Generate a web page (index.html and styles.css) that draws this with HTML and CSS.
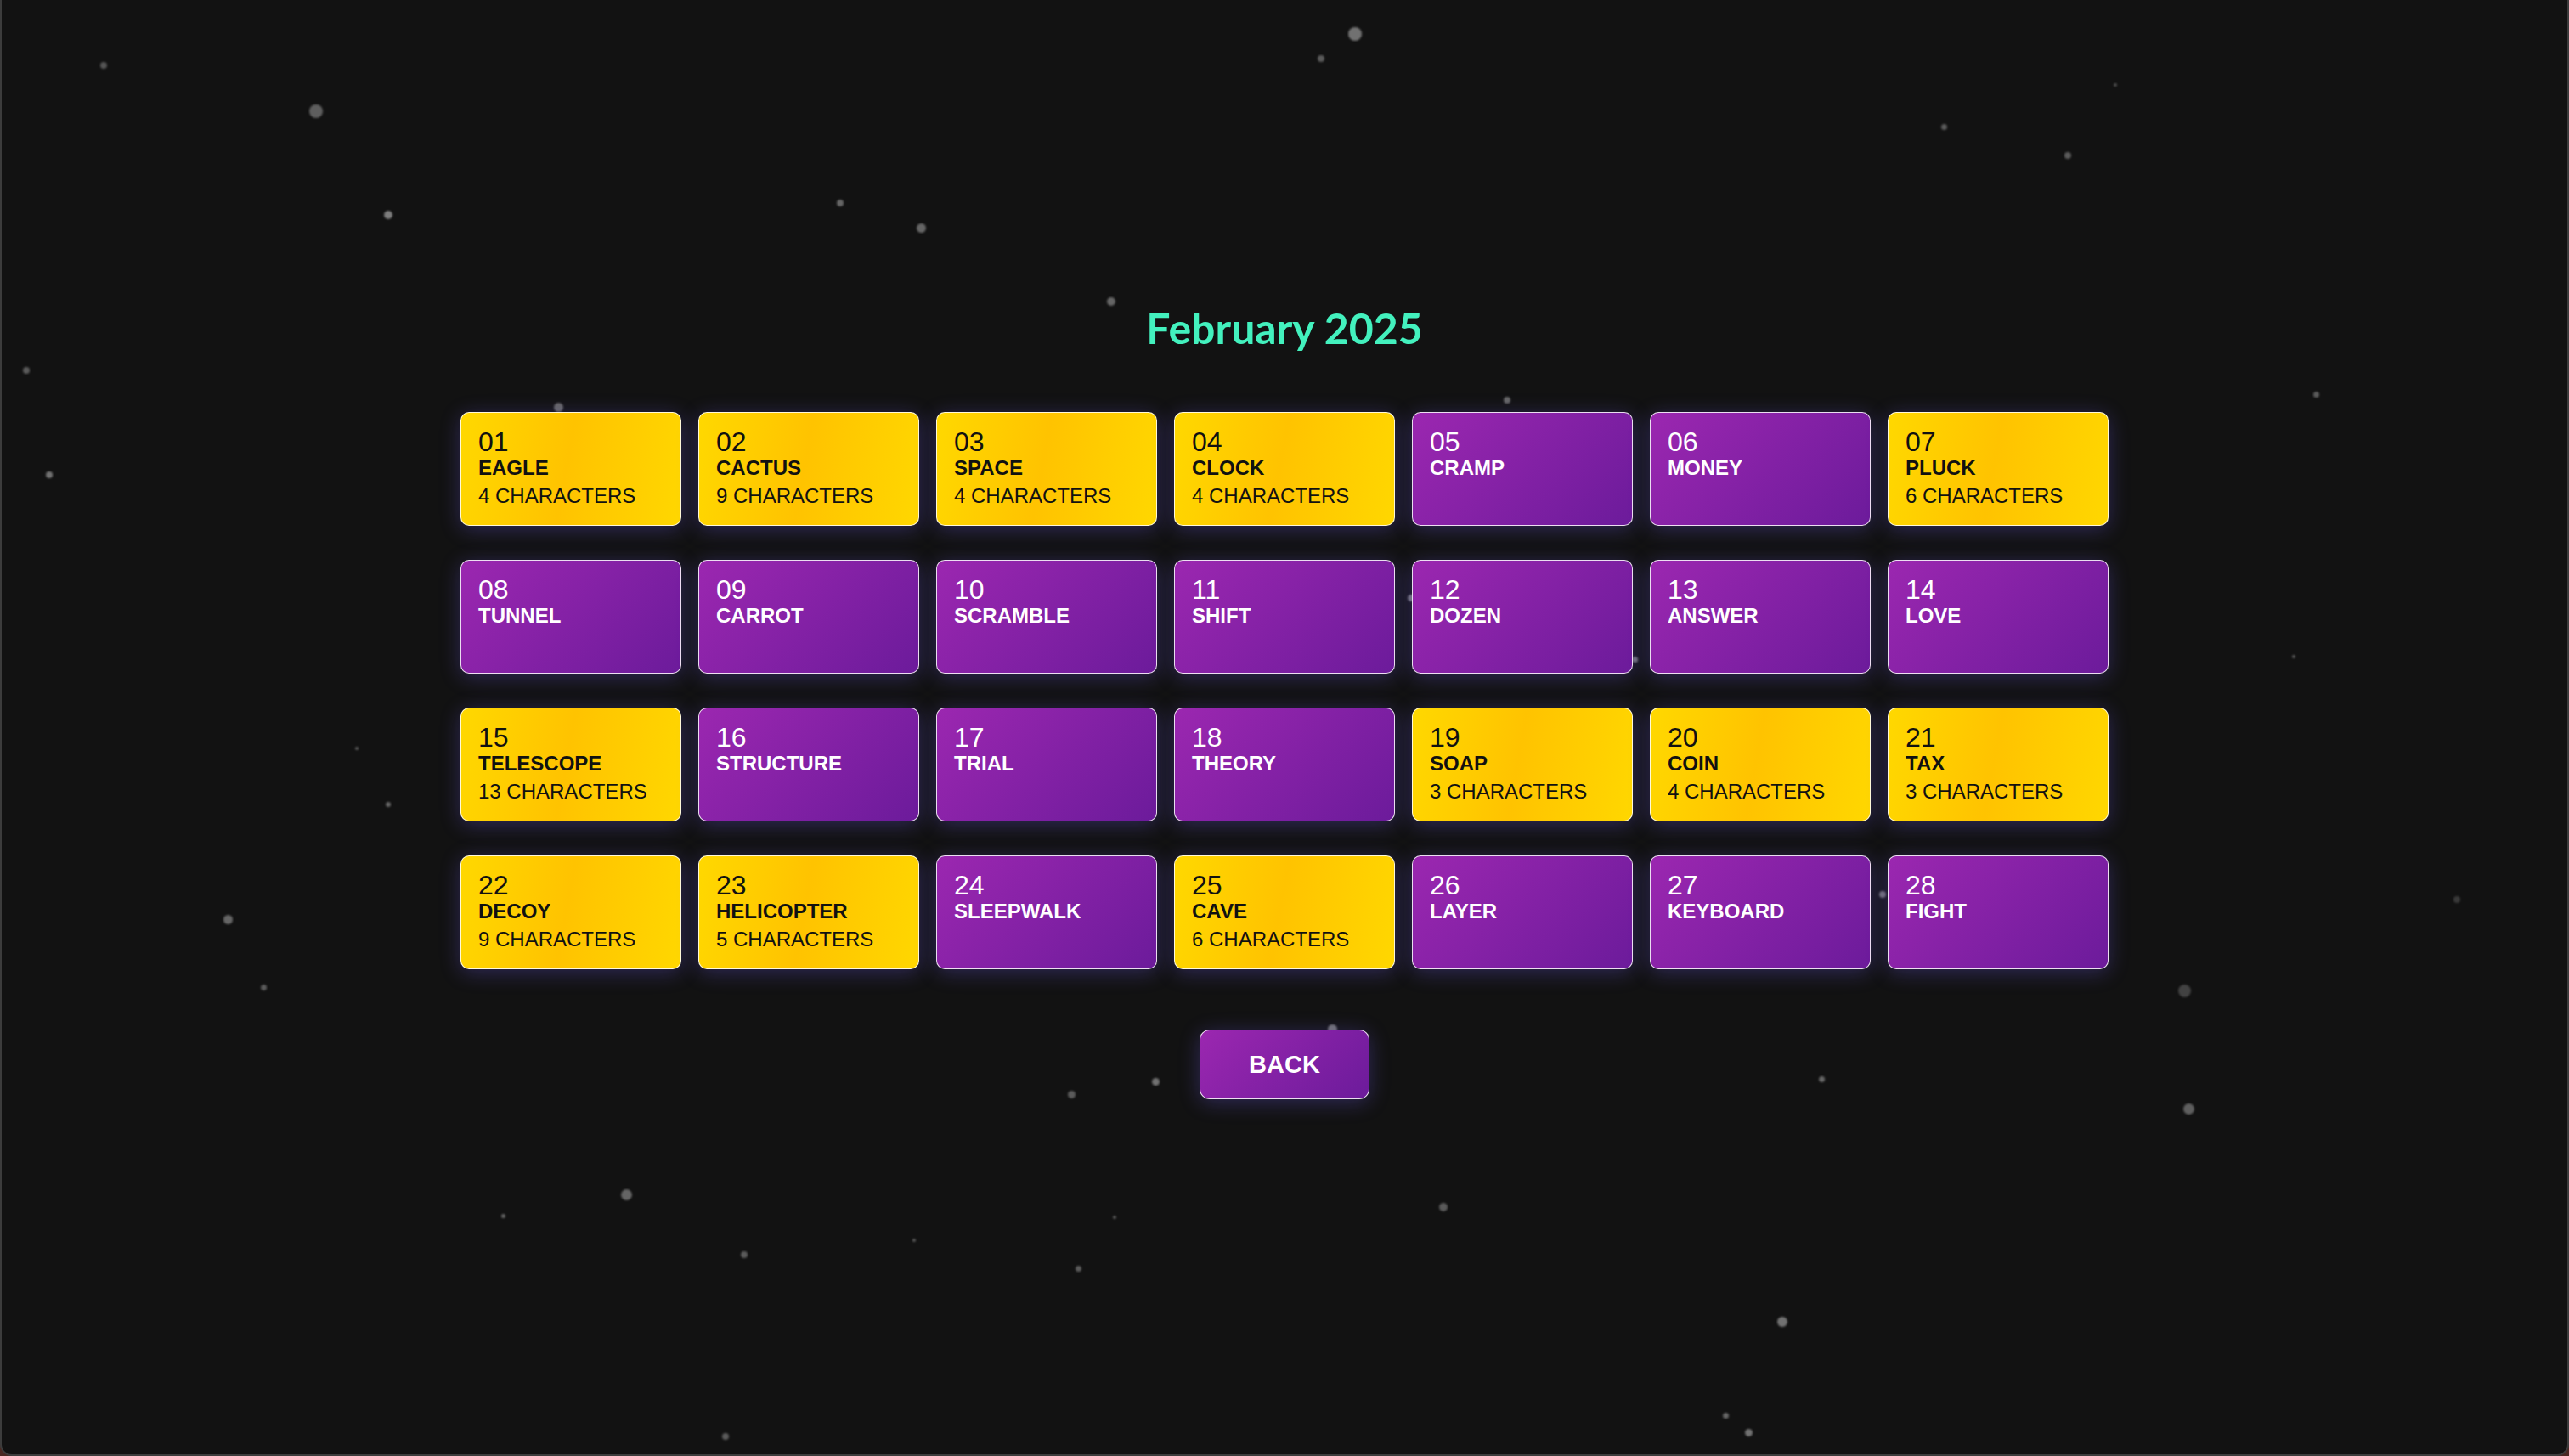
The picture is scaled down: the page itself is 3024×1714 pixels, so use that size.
FILE: index.html
```html
<!DOCTYPE html>
<html lang="en">
<head>
<meta charset="utf-8">
<title>February 2025</title>
<link rel="stylesheet" href="styles.css">
</head>
<body>
<div class="frame">
  <div class="stars">
    <span class="star" style="left:116px;top:73px;width:8px;height:8px;opacity:.28"></span>
    <span class="star" style="left:362px;top:123px;width:16px;height:16px;opacity:.32"></span>
    <span class="star" style="left:450px;top:248px;width:10px;height:10px;opacity:.45"></span>
    <span class="star" style="left:1585px;top:32px;width:16px;height:16px;opacity:.4"></span>
    <span class="star" style="left:1549px;top:65px;width:8px;height:8px;opacity:.3"></span>
    <span class="star" style="left:983px;top:235px;width:8px;height:8px;opacity:.35"></span>
    <span class="star" style="left:1077px;top:263px;width:11px;height:11px;opacity:.35"></span>
    <span class="star" style="left:1301px;top:350px;width:10px;height:10px;opacity:.35"></span>
    <span class="star" style="left:2283px;top:146px;width:7px;height:7px;opacity:.3"></span>
    <span class="star" style="left:2428px;top:179px;width:8px;height:8px;opacity:.3"></span>
    <span class="star" style="left:2486px;top:98px;width:4px;height:4px;opacity:.25"></span>
    <span class="star" style="left:25px;top:432px;width:8px;height:8px;opacity:.3"></span>
    <span class="star" style="left:52px;top:555px;width:8px;height:8px;opacity:.4"></span>
    <span class="star" style="left:650px;top:474px;width:11px;height:11px;opacity:.35"></span>
    <span class="star" style="left:1768px;top:467px;width:8px;height:8px;opacity:.35"></span>
    <span class="star" style="left:2721px;top:461px;width:7px;height:7px;opacity:.3"></span>
    <span class="star" style="left:2696px;top:771px;width:4px;height:4px;opacity:.3"></span>
    <span class="star" style="left:416px;top:879px;width:4px;height:4px;opacity:.3"></span>
    <span class="star" style="left:452px;top:944px;width:6px;height:6px;opacity:.35"></span>
    <span class="star" style="left:1655px;top:700px;width:8px;height:8px;opacity:.4"></span>
    <span class="star" style="left:1919px;top:773px;width:7px;height:7px;opacity:.4"></span>
    <span class="star" style="left:2210px;top:1049px;width:8px;height:8px;opacity:.4"></span>
    <span class="star" style="left:2886px;top:1055px;width:8px;height:8px;opacity:.16"></span>
    <span class="star" style="left:2562px;top:1159px;width:15px;height:15px;opacity:.2"></span>
    <span class="star" style="left:261px;top:1077px;width:11px;height:11px;opacity:.35"></span>
    <span class="star" style="left:305px;top:1159px;width:7px;height:7px;opacity:.3"></span>
    <span class="star" style="left:1255px;top:1284px;width:9px;height:9px;opacity:.3"></span>
    <span class="star" style="left:1354px;top:1269px;width:9px;height:9px;opacity:.4"></span>
    <span class="star" style="left:1561px;top:1206px;width:11px;height:11px;opacity:.4"></span>
    <span class="star" style="left:2139px;top:1267px;width:7px;height:7px;opacity:.35"></span>
    <span class="star" style="left:2568px;top:1299px;width:13px;height:13px;opacity:.32"></span>
    <span class="star" style="left:729px;top:1400px;width:13px;height:13px;opacity:.35"></span>
    <span class="star" style="left:588px;top:1429px;width:5px;height:5px;opacity:.35"></span>
    <span class="star" style="left:1692px;top:1416px;width:10px;height:10px;opacity:.3"></span>
    <span class="star" style="left:1308px;top:1431px;width:4px;height:4px;opacity:.3"></span>
    <span class="star" style="left:1072px;top:1458px;width:4px;height:4px;opacity:.3"></span>
    <span class="star" style="left:870px;top:1473px;width:8px;height:8px;opacity:.3"></span>
    <span class="star" style="left:1264px;top:1490px;width:7px;height:7px;opacity:.3"></span>
    <span class="star" style="left:2090px;top:1550px;width:12px;height:12px;opacity:.4"></span>
    <span class="star" style="left:2026px;top:1663px;width:7px;height:7px;opacity:.35"></span>
    <span class="star" style="left:2052px;top:1682px;width:9px;height:9px;opacity:.4"></span>
    <span class="star" style="left:848px;top:1687px;width:8px;height:8px;opacity:.3"></span>
  </div>

  <main class="month">
    <h1 class="month-title">February 2025</h1>
    <div class="days">
      <div class="day solved"><span class="day-num">01</span><span class="day-word">EAGLE</span><span class="day-len">4 CHARACTERS</span></div>
      <div class="day solved"><span class="day-num">02</span><span class="day-word">CACTUS</span><span class="day-len">9 CHARACTERS</span></div>
      <div class="day solved"><span class="day-num">03</span><span class="day-word">SPACE</span><span class="day-len">4 CHARACTERS</span></div>
      <div class="day solved"><span class="day-num">04</span><span class="day-word">CLOCK</span><span class="day-len">4 CHARACTERS</span></div>
      <div class="day open"><span class="day-num">05</span><span class="day-word">CRAMP</span></div>
      <div class="day open"><span class="day-num">06</span><span class="day-word">MONEY</span></div>
      <div class="day solved"><span class="day-num">07</span><span class="day-word">PLUCK</span><span class="day-len">6 CHARACTERS</span></div>

      <div class="day open"><span class="day-num">08</span><span class="day-word">TUNNEL</span></div>
      <div class="day open"><span class="day-num">09</span><span class="day-word">CARROT</span></div>
      <div class="day open"><span class="day-num">10</span><span class="day-word">SCRAMBLE</span></div>
      <div class="day open"><span class="day-num">11</span><span class="day-word">SHIFT</span></div>
      <div class="day open"><span class="day-num">12</span><span class="day-word">DOZEN</span></div>
      <div class="day open"><span class="day-num">13</span><span class="day-word">ANSWER</span></div>
      <div class="day open"><span class="day-num">14</span><span class="day-word">LOVE</span></div>

      <div class="day solved"><span class="day-num">15</span><span class="day-word">TELESCOPE</span><span class="day-len">13 CHARACTERS</span></div>
      <div class="day open"><span class="day-num">16</span><span class="day-word">STRUCTURE</span></div>
      <div class="day open"><span class="day-num">17</span><span class="day-word">TRIAL</span></div>
      <div class="day open"><span class="day-num">18</span><span class="day-word">THEORY</span></div>
      <div class="day solved"><span class="day-num">19</span><span class="day-word">SOAP</span><span class="day-len">3 CHARACTERS</span></div>
      <div class="day solved"><span class="day-num">20</span><span class="day-word">COIN</span><span class="day-len">4 CHARACTERS</span></div>
      <div class="day solved"><span class="day-num">21</span><span class="day-word">TAX</span><span class="day-len">3 CHARACTERS</span></div>

      <div class="day solved"><span class="day-num">22</span><span class="day-word">DECOY</span><span class="day-len">9 CHARACTERS</span></div>
      <div class="day solved"><span class="day-num">23</span><span class="day-word">HELICOPTER</span><span class="day-len">5 CHARACTERS</span></div>
      <div class="day open"><span class="day-num">24</span><span class="day-word">SLEEPWALK</span></div>
      <div class="day solved"><span class="day-num">25</span><span class="day-word">CAVE</span><span class="day-len">6 CHARACTERS</span></div>
      <div class="day open"><span class="day-num">26</span><span class="day-word">LAYER</span></div>
      <div class="day open"><span class="day-num">27</span><span class="day-word">KEYBOARD</span></div>
      <div class="day open"><span class="day-num">28</span><span class="day-word">FIGHT</span></div>
    </div>
    <button class="back-btn" type="button">BACK</button>
  </main>
</div>
</body>
</html>
```

FILE: styles.css
```css
html {
  background: #4a2823;
}

body {
  margin: 0;
  font-family: "Liberation Sans", Arial, sans-serif;
}

.frame {
  position: relative;
  height: 1714px;
  box-sizing: border-box;
  background: #121212;
  border-left: 2px solid #3c3c3c;
  border-right: 2px solid #3c3c3c;
  border-bottom: 2px solid #3c3c3c;
  border-radius: 0 0 14px 14px;
  overflow: hidden;
}

.stars {
  position: absolute;
  inset: 0;
  z-index: 0;
}

.star {
  position: absolute;
  border-radius: 50%;
  background: #ffffff;
  filter: blur(0.8px);
}

.month {
  position: relative;
  z-index: 1;
  display: flex;
  flex-direction: column;
  align-items: center;
  padding-top: 357px;
}

.month-title {
  margin: 0 0 70px;
  font-family: Lato, "Open Sans", sans-serif;
  font-weight: 700;
  font-size: 50px;
  line-height: 58px;
  color: #43f1be;
}

.days {
  display: grid;
  grid-template-columns: repeat(7, 260px);
  grid-auto-rows: 134px;
  column-gap: 20px;
  row-gap: 40px;
}

.day {
  display: flex;
  flex-direction: column;
  box-sizing: border-box;
  padding: 17px 20px 0;
  border: 1px solid rgba(255, 255, 255, 0.85);
  border-radius: 10px;
  box-shadow: 0 4px 24px rgba(110, 90, 230, 0.33);
}

.day.solved {
  background: linear-gradient(100deg, #ffd800 0%, #ffc300 48%, #ffd700 100%);
  color: #111111;
}

.day.open {
  background: linear-gradient(135deg, #9b27b0 0%, #6c1b9b 100%);
  color: #ffffff;
}

.day-num {
  font-size: 32px;
  line-height: 34px;
}

.day-word {
  font-size: 24px;
  font-weight: 700;
  line-height: 27px;
}

.day-len {
  margin-top: 6px;
  font-size: 24px;
  line-height: 28px;
}

.back-btn {
  margin-top: 71px;
  width: 200px;
  height: 82px;
  padding: 0;
  border: 1px solid rgba(255, 255, 255, 0.85);
  border-radius: 12px;
  background: linear-gradient(135deg, #9b27b0 0%, #6c1b9b 100%);
  color: #ffffff;
  font-family: "Liberation Sans", Arial, sans-serif;
  font-weight: 700;
  font-size: 29px;
  box-shadow: 0 4px 24px rgba(110, 90, 230, 0.33);
  cursor: pointer;
}
```
